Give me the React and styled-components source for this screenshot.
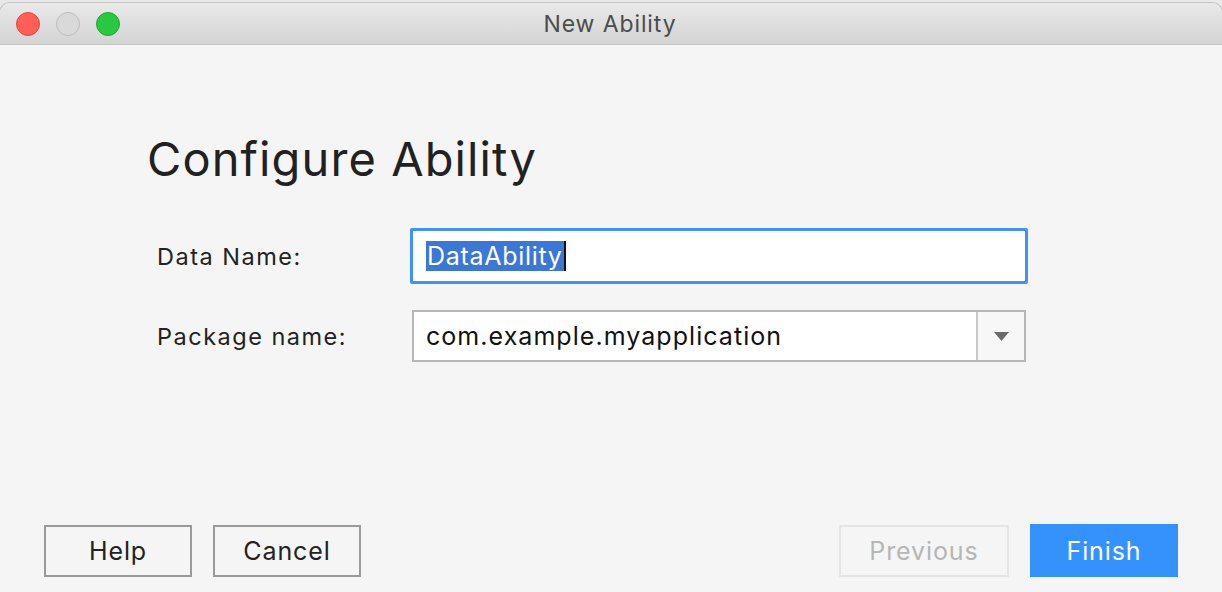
import styled, { createGlobalStyle } from 'styled-components'

const GlobalStyle = createGlobalStyle`
  html, body {
    margin: 0;
    padding: 0;
    background: #d8d8d8;
    font-family: Inter, "Noto Sans", "Liberation Sans", sans-serif;
    -webkit-font-smoothing: antialiased;
  }
`

const Screen = styled.div`
  width: 1222px;
  height: 592px;
  overflow: hidden;
  display: flex;
  flex-direction: column;
  background: #e9e9e9;
  padding-top: 3px;
  box-sizing: border-box;
`

const Window = styled.div`
  flex: 1;
  display: flex;
  flex-direction: column;
  background: #f5f5f5;
  border-radius: 10px 10px 0 0;
  overflow: hidden;
  box-shadow: 0 0 0 1px #c4c4c4;
`

const TitleBar = styled.div`
  position: relative;
  height: 41px;
  flex-shrink: 0;
  display: flex;
  align-items: center;
  justify-content: center;
  background: linear-gradient(#e9e9e9, #d4d4d4);
  border-bottom: 1px solid #c2c2c2;
`

const Lights = styled.div`
  position: absolute;
  left: 16px;
  top: 9px;
  display: flex;
  gap: 16px;
`

const Light = styled.span`
  width: 24px;
  height: 24px;
  border-radius: 50%;
  box-sizing: border-box;
  background: ${(p) => p.color};
  border: 1px solid ${(p) => p.edge};
`

const Title = styled.div`
  font-size: 23px;
  color: #4c4c4c;
  letter-spacing: 0.9px;
  margin-left: -2px;
`

const Body = styled.div`
  flex: 1;
  display: flex;
  flex-direction: column;
  padding: 0 44px 15px 44px;
`

const Heading = styled.h1`
  margin: 88px 0 0 103px;
  font-size: 47px;
  font-weight: 400;
  color: #212121;
  line-height: 52px;
  letter-spacing: 1.1px;
`

const Form = styled.div`
  margin: 43px 0 0 113px;
  display: grid;
  grid-template-columns: 253px 618px;
  row-gap: 26px;
  align-items: center;
`

const Label = styled.div`
  font-size: 23.5px;
  color: #222;
  letter-spacing: 1.5px;
`

const TextField = styled.div`
  height: 56px;
  box-sizing: border-box;
  border: 3px solid #3d94f6;
  border-radius: 2px;
  background: #fff;
  display: flex;
  align-items: center;
  padding-left: 13px;
`

const Selected = styled.span`
  font-size: 25px;
  letter-spacing: 0.7px;
  color: #fff;
  background: #3a77d6;
  line-height: 30px;
  padding: 0 1px;
  border-right: 2px solid #111;
`

const Select = styled.div`
  height: 52px;
  margin-left: 2px;
  margin-right: 2px;
  box-sizing: border-box;
  border: 2px solid #b6b6b6;
  background: #fff;
  display: flex;
  align-items: stretch;
`

const SelectValue = styled.div`
  flex: 1;
  display: flex;
  align-items: center;
  padding-left: 12px;
  font-size: 25px;
  letter-spacing: 1.05px;
  color: #111;
`

const SelectArrow = styled.div`
  width: 46px;
  border-left: 2px solid #c8c8c8;
  background: #f7f7f7;
  display: flex;
  align-items: center;
  justify-content: center;
`

const Footer = styled.div`
  margin-top: auto;
  display: flex;
  align-items: center;
  gap: 21px;
`

const Spacer = styled.div`
  flex: 1;
`

const Button = styled.button`
  height: ${(p) => (p.primary ? '53px' : '52px')};
  width: ${(p) => p.w || '148px'};
  box-sizing: border-box;
  font-family: inherit;
  font-size: 25px;
  letter-spacing: 0.9px;
  border-radius: 0;
  border: ${(p) =>
    p.primary ? 'none' : p.disabled ? '2px solid #e4e4e4' : '2px solid #9a9a9a'};
  background: ${(p) => (p.primary ? '#3592fd' : '#f5f5f5')};
  color: ${(p) => (p.primary ? '#fff' : p.disabled ? '#b6b6b6' : '#222')};
  padding: 0;
`

export default function App() {
  return (
    <>
      <GlobalStyle />
      <Screen>
        <Window>
          <TitleBar>
            <Lights>
              <Light color="#fe5f57" edge="#e2463f" />
              <Light color="#d9d9d9" edge="#bcbcbc" />
              <Light color="#28c840" edge="#1aab29" />
            </Lights>
            <Title>New Ability</Title>
          </TitleBar>
          <Body>
            <Heading>Configure Ability</Heading>
            <Form>
              <Label>Data Name:</Label>
              <TextField>
                <Selected>DataAbility</Selected>
              </TextField>
              <Label>Package name:</Label>
              <Select>
                <SelectValue>com.example.myapplication</SelectValue>
                <SelectArrow>
                  <svg width="15" height="9" viewBox="0 0 15 9">
                    <path d="M0 0 H15 L7.5 9 Z" fill="#6b6b6b" />
                  </svg>
                </SelectArrow>
              </Select>
            </Form>
            <Footer>
              <Button>Help</Button>
              <Button>Cancel</Button>
              <Spacer />
              <Button disabled w="170px">Previous</Button>
              <Button primary>Finish</Button>
            </Footer>
          </Body>
        </Window>
      </Screen>
    </>
  )
}
